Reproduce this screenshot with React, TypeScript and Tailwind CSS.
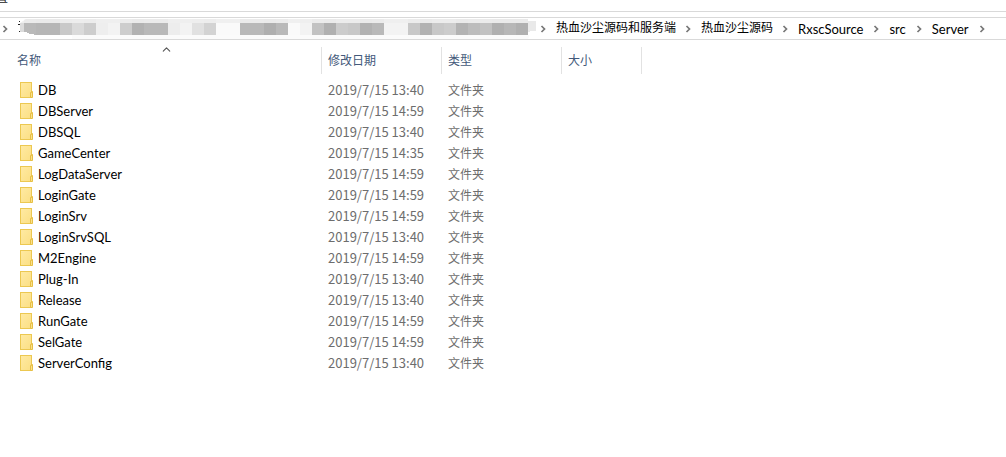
import { ChevronUp } from 'lucide-react';

const PATH = [
  { label: '热血沙尘源码和服务端', cjk: true },
  { label: '热血沙尘源码', cjk: true },
  { label: 'RxscSource', cjk: false },
  { label: 'src', cjk: false },
  { label: 'Server', cjk: false },
];

const FOLDERS = [
  { name: 'DB', date: '2019/7/15 13:40' },
  { name: 'DBServer', date: '2019/7/15 14:59' },
  { name: 'DBSQL', date: '2019/7/15 13:40' },
  { name: 'GameCenter', date: '2019/7/15 14:35' },
  { name: 'LogDataServer', date: '2019/7/15 14:59' },
  { name: 'LoginGate', date: '2019/7/15 14:59' },
  { name: 'LoginSrv', date: '2019/7/15 14:59' },
  { name: 'LoginSrvSQL', date: '2019/7/15 13:40' },
  { name: 'M2Engine', date: '2019/7/15 14:59' },
  { name: 'Plug-In', date: '2019/7/15 13:40' },
  { name: 'Release', date: '2019/7/15 13:40' },
  { name: 'RunGate', date: '2019/7/15 14:59' },
  { name: 'SelGate', date: '2019/7/15 14:59' },
  { name: 'ServerConfig', date: '2019/7/15 13:40' },
];

// Grey levels of the censored path, one per 12px block
const MOSAIC = [
  '#b9b9b9', '#b6b6b6', '#b6b6b6', '#c9c9c9', '#dadada', '#cdcdcd', '#eeeeee', '#f3f3f3',
  '#cdcdcd', '#b2b2b2', '#b9b9b9', '#b9b9b9', '#ededed', '#f3f3f3', '#e1e1e1', '#d3d3d3',
  '#fafafa', '#fafafa', '#b9b9b9', '#b9b9b9', '#afafaf', '#b9b9b9', '#fafafa', '#f3f3f3',
  '#c2c2c2', '#b0b0b0', '#cccccc', '#c8c8c8', '#b2b2b2', '#b9b9b9', '#f3f3f3', '#f3f3f3',
  '#c8c8c8', '#b2b2b2', '#c8c8c8', '#cccccc', '#b3b3b3', '#bcbcbc', '#c2c2c2', '#b0b0b0',
  '#b7b7b7', '#b0b0b0',
];

function FolderIcon() {
  return (
    <svg className="block shrink-0" width="13" height="16" viewBox="0 0 13 16" aria-hidden="true">
      <defs>
        <linearGradient id="folder" x1="0" y1="0" x2="1" y2="1">
          <stop offset="0" stopColor="#ffeaa3" />
          <stop offset="1" stopColor="#fbdf84" />
        </linearGradient>
      </defs>
      <rect x="0.5" y="0.5" width="11" height="15" fill="url(#folder)" stroke="#ecc851" />
      <path d="M10.5 15.5V10.5H11.5V9.5H12.5V15.5Z" fill="#fbe08a" stroke="#e6bf45" />
    </svg>
  );
}

function Mosaic() {
  return (
    <svg className="block shrink-0" width="520" height="25" viewBox="18 17 520 25" aria-hidden="true">
      <path d="M72 36H529V39L524 42H72Z" fill="#fbfbfb" />
      <path d="M528 22H536V32H530V33H528Z" fill="#e9e9e9" />
      <path d="M26 20H528V24H20Z" fill="#efefef" />
      <path d="M20 24H24V33H20Z" fill="#dcdcdc" />
      {MOSAIC.map((color, i) => (
        <g key={i}>
          <rect x={24 + i * 12} y="24" width="12" height="12" fill={color} />
          <rect x={24 + i * 12} y="20" width="12" height="4" fill={color} opacity="0.08" />
        </g>
      ))}
      <path d="M20 33H27V34H29V35H34V36H20Z" fill="#ffffff" />
      <path d="M19 22H20V23H19ZM18 25H20V26H18ZM19 32H20V33H19Z" fill="#222222" />
    </svg>
  );
}

function Separator() {
  return (
    <svg className="block shrink-0" width="10" height="10" viewBox="0 0 10 10" aria-hidden="true">
      <path d="M3.5 2L6.5 5L3.5 8" fill="none" stroke="#777777" strokeWidth="1.7" />
    </svg>
  );
}

function AddressBar() {
  return (
    <nav
      aria-label="Path"
      className="flex h-[23px] items-center overflow-hidden whitespace-nowrap border-y border-[#d9d9d9] text-black"
    >
      <Separator />
      <div className="-my-px ml-2 h-[25px] shrink-0">
        <Mosaic />
      </div>
      <Separator />
      {PATH.map((item) => (
        <div key={item.label} className="flex shrink-0 items-center">
          <a
            href="#"
            className={item.cjk ? 'pl-2 pr-[7px] pb-px text-[12px] leading-5' : 'px-2 text-[13px] leading-5'}
          >
            {item.label}
          </a>
          <Separator />
        </div>
      ))}
    </nav>
  );
}

export default function App() {
  return (
    <div className="min-h-screen bg-white font-['Lato','Noto_Sans_CJK_SC',sans-serif]">
      <div className="flex h-3 items-start overflow-hidden border-b border-[#d9d9d9]">
        <span className="-mt-2.5 -ml-1 text-[12px] leading-4 text-[#222222]">置</span>
      </div>
      <div className="pt-[5px]">
        <AddressBar />
      </div>

      <table className="mt-[7px] w-full table-fixed border-separate border-spacing-0 text-left">
        <colgroup>
          <col className="w-[322px]" />
          <col className="w-[120px]" />
          <col className="w-[120px]" />
          <col className="w-[80px]" />
          <col />
        </colgroup>
        <thead className="text-[12px] leading-[27px] text-[#43597a]">
          <tr>
            <th className="relative border-r border-[#e2e2e2] pl-[17px] font-normal">
              名称
              <ChevronUp className="absolute -top-1 left-40 text-[#555555]" size={13} strokeWidth={2} />
            </th>
            <th className="border-r border-[#e2e2e2] pl-1.5 font-normal">修改日期</th>
            <th className="border-r border-[#e2e2e2] pl-1.5 font-normal">类型</th>
            <th className="border-r border-[#e2e2e2] pl-1.5 font-normal">大小</th>
            <td />
          </tr>
        </thead>
        <tbody className="text-[13px] leading-[21px] text-[#6d6d6d] before:block before:h-1.5">
          {FOLDERS.map((folder) => (
            <tr key={folder.name} className="h-[21px] align-top">
              <td className="pl-5">
                <div className="flex items-start gap-[5px] text-black">
                  <div className="pt-0.5">
                    <FolderIcon />
                  </div>
                  <span>{folder.name}</span>
                </div>
              </td>
              <td className="whitespace-nowrap pl-1.5 font-['Noto_Sans_CJK_SC',sans-serif] leading-5">
                {folder.date}
              </td>
              <td className="pl-1.5 text-[12px]">文件夹</td>
              <td />
              <td />
            </tr>
          ))}
        </tbody>
      </table>
    </div>
  );
}
